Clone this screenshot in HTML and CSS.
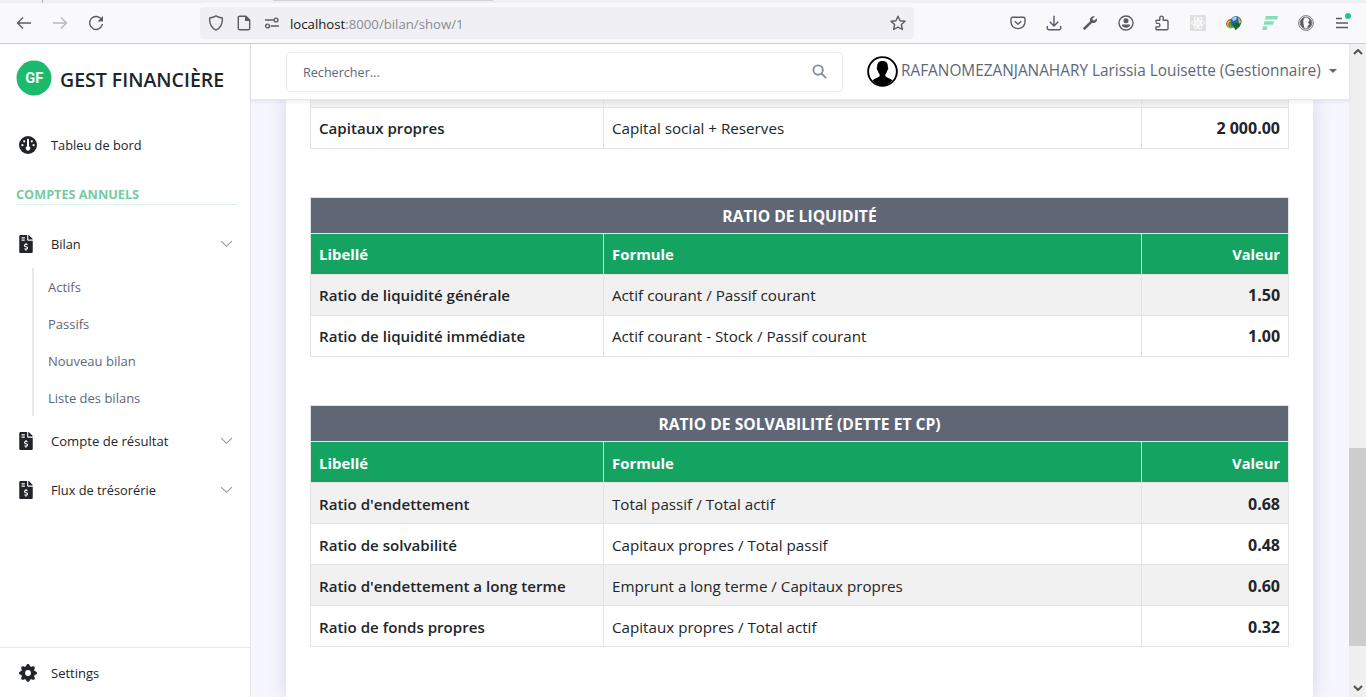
FILE: index.html
```html
<!DOCTYPE html>
<html lang="fr">
<head>
<meta charset="utf-8">
<title>Gest Financière</title>
<link rel="stylesheet" href="styles.css">
</head>
<body>
<svg class="sprite" aria-hidden="true">
  <symbol id="invoice" viewBox="0 0 384 512"><path d="M377 105L279.100 7c-4.500-4.500-10.600-7-17-7H256v128h128v-6.100c0-6.300-2.500-12.400-7-16.900zM224 136V0H44C15 0 0 15 0 44v424c0 29 15 44 44 44h296c29 0 44-15 44-44V160H248c-13.200 0-24-10.800-24-24zM64 72c0-4.400 3.600-8 8-8h80c4.400 0 8 3.600 8 8v16c0 4.400-3.600 8-8 8H72c-4.400 0-8-3.600-8-8V72zm0 80v-16c0-4.400 3.600-8 8-8h80c4.400 0 8 3.600 8 8v16c0 4.400-3.600 8-8 8H72c-4.400 0-8-3.600-8-8zm144 263.900V440c0 4.400-3.600 8-8 8h-16c-4.400 0-8-3.600-8-8v-24.300c-11.300-.6-22.300-4.500-31.400-11.300-3.900-2.900-4.100-8.800-.6-12.100l11.800-11.200c2.800-2.600 6.900-2.800 10.100-.7 3.900 2.400 8.300 3.700 12.800 3.700h28.100c6.500 0 11.800-5.900 11.800-13.200 0-6-3.600-11.200-8.800-12.700l-45-13.500c-18.600-5.600-31.600-23.400-31.600-43.400 0-24.500 19.100-44.400 42.700-45.100V232c0-4.400 3.600-8 8-8h16c4.400 0 8 3.600 8 8v24.300c11.300.6 22.300 4.500 31.400 11.300 3.900 2.900 4.100 8.800.6 12.100l-11.800 11.200c-2.800 2.600-6.900 2.800-10.100.7-3.900-2.400-8.300-3.700-12.800-3.700h-28.100c-6.500 0-11.800 5.900-11.800 13.200 0 6 3.600 11.200 8.800 12.700l45 13.500c18.600 5.600 31.600 23.400 31.600 43.400 0 24.500-19.100 44.400-42.700 45.200z"/></symbol>
  <symbol id="chevron" viewBox="0 0 14 8"><path d="M1.200 1 7 6.600 12.800 1"/></symbol>
</svg>

<div class="tabstrip"><i class="tab-mark"></i><i class="tab-edge"></i></div>
<div class="toolbar">
  <div class="nav-buttons">
    <svg class="tb" viewBox="0 0 16 16"><path d="M15 8H1.500M7 2.500 1.500 8 7 13.500"/></svg>
    <svg class="tb off" viewBox="0 0 16 16"><path d="M1 8h13.500M9 2.500 14.500 8 9 13.500"/></svg>
    <svg class="tb" viewBox="0 0 16 16"><path d="M13.600 4.500A6.500 6.500 0 1 0 14.500 9"/><path class="solid" d="M15 1v5.500H9.500z"/></svg>
  </div>
  <div class="urlbar">
    <svg class="tb" viewBox="0 0 16 16"><path d="M8 .9c2 1.300 4 1.900 6.400 2.100C14.700 9 12.500 13 8 15.200 3.500 13 1.300 9 1.600 3 4 2.800 6 2.200 8 .9z"/></svg>
    <svg class="tb" viewBox="0 0 16 16"><path d="M3.500 1.200h6.300L13.700 5v8.500a1.200 1.200 0 0 1-1.200 1.200h-9a1.200 1.200 0 0 1-1.200-1.200V2.400a1.200 1.200 0 0 1 1.200-1.200z"/><path class="solid" d="M9 1h1l4 4v1H9z"/></svg>
    <svg class="tb perms" viewBox="0 0 16 16"><path d="M1 5h8.500M6.500 11H15"/><circle cx="12" cy="5" r="1.900"/><circle cx="3.500" cy="11" r="1.900"/></svg>
    <span class="url"><b>localhost</b>:8000/bilan/show/1</span>
    <svg class="tb star" viewBox="0 0 16 16"><path d="M8 1.200l2.100 4.500 4.900.6-3.600 3.300 1 4.900L8 12.100l-4.400 2.400 1-4.900L1 6.300l4.900-.6z"/></svg>
  </div>
  <div class="extensions">
    <svg class="tb" viewBox="0 0 16 16"><path d="M2.500 2.300h11a1.500 1.500 0 0 1 1.500 1.500V7a7 6.600 0 0 1-14 0V3.800a1.500 1.500 0 0 1 1.500-1.500z"/><path d="M4.800 6.200 8 9.200l3.200-3"/></svg>
    <svg class="tb" viewBox="0 0 16 16"><path d="M8 .8v10M3.800 6.800 8 11l4.200-4.200M1.300 11v2.300a1.400 1.400 0 0 0 1.400 1.400h10.600a1.400 1.400 0 0 0 1.400-1.400V11"/></svg>
    <svg class="tb" viewBox="0 0 16 16"><path class="solid" d="M14.700 3.300 12 5.800l-1.800-1.700 2.600-2.700C10.500.5 7.600 2.300 8 5.300c0 .6.100 1-.3 1.500L1.500 12.600c-1.200 1.200.7 3 1.900 1.900l6-6.100c.5-.5 1-.4 1.600-.4 3 .4 4.700-2.300 3.700-4.700z"/></svg>
    <svg class="tb" viewBox="0 0 16 16"><circle cx="8" cy="8" r="7"/><circle class="solid" cx="8" cy="5.800" r="2.500"/><path class="solid" d="M3.800 9.500h8.400c0 1.800-1.800 3.300-4.200 3.300s-4.200-1.500-4.200-3.300z"/></svg>
    <svg class="tb" viewBox="0 0 16 16"><path d="M2 7.500V6.200a1 1 0 0 1 1-1h2.800V2.800a1.700 1.700 0 0 1 3.400 0v2.400H13a1 1 0 0 1 1 1v7.600a1 1 0 0 1-1 1H3a1 1 0 0 1-1-1v-1.900h2.200a1.700 1.700 0 0 0 0-3.500H2"/></svg>
    <svg class="react" viewBox="0 0 16 16"><rect width="16" height="16"/><ellipse cx="8" cy="8" rx="6.300" ry="2.400"/><ellipse cx="8" cy="8" rx="6.300" ry="2.400" transform="rotate(60 8 8)"/><ellipse cx="8" cy="8" rx="6.300" ry="2.400" transform="rotate(120 8 8)"/><circle cx="8" cy="8" r="1.200"/></svg>
    <svg class="idm" viewBox="0 0 16 16"><ellipse cx="5" cy="8.500" rx="5" ry="4.600" fill="#d84a2e" transform="rotate(-35 5 8.500)"/><ellipse cx="5.400" cy="9" rx="4.200" ry="3.800" fill="#f0c530"/><ellipse cx="6" cy="9.500" rx="3.800" ry="3.200" fill="#44a83c"/><circle cx="10" cy="6.600" r="5.600" fill="#2468b4"/><path d="M6 4c1-2 3-2.500 5-2l-1 3-3 1z" fill="#9fd2ef"/><path d="M12 2.500c2 1 3 3 3 5l-2 1z" fill="#e6bd2e"/><path d="M6.500 8h4V6.500l4 4.200-5 4.600-2-4z" fill="#17691f"/></svg>
    <svg class="fbars" viewBox="0 0 16 16"><path d="M4 1h12l-1 3.600H3zM2.500 6.300h9.500l-1 3.500H1.500zM1 11.500h4.500l-1 3.500H0z"/></svg>
    <svg class="tb duck" viewBox="0 0 16 16"><circle cx="8" cy="8" r="7.400"/><circle cx="8" cy="8" r="5.900"/><path class="solid" d="M6.600 13.400C3 12 2.200 9 2.600 6.500 3 4 5 2.600 7.200 2.500 5.600 3.800 5 5.500 5.400 8c.2 1.800.8 3.500 1.200 5.400zM8.500 2.600c3 .2 5 2.600 5 5.400 0 2.500-1.600 4.500-3.800 5.200-.3-1.200-.2-2 .2-2.700 1-.5 1.400-1 1.500-1.600-.9-.3-1.500-1-1.300-1.800.3-.8.900-.9 1.300-.8-.2-1.900-1.200-3.100-2.900-3.700z"/></svg>
    <span class="menu"><svg class="tb" viewBox="0 0 16 16"><path d="M2 3.500h6M2 8h12M2 12.500h12"/></svg><i class="dot"></i></span>
  </div>
</div>

<div class="page">
  <aside class="sidebar">
    <div class="brand">
      <svg class="logo" viewBox="0 0 36 36"><circle cx="18" cy="18" r="17.500"/><text x="18.200" y="23.200" text-anchor="middle" textLength="18" lengthAdjust="spacingAndGlyphs">GF</text></svg>
      <span>GEST FINANCIÈRE</span>
    </div>
    <a class="item first"><svg class="ico" viewBox="0 0 18 18"><circle cx="9" cy="9" r="9"/><g fill="#fff"><path d="M8 3.800a1 1 0 0 1 2 0v6.500a2.200 2.200 0 1 1-2 0z"/><circle cx="5.200" cy="5.300" r="1.100"/><circle cx="12.800" cy="5.300" r="1.100"/><circle cx="3.400" cy="9.200" r="1.100"/><circle cx="14.600" cy="9.200" r="1.100"/></g></svg><span>Tableu de bord</span></a>
    <h2 class="heading">COMPTES ANNUELS</h2>
    <a class="item"><svg class="ico doc"><use href="#invoice"/></svg><span>Bilan</span><svg class="chev"><use href="#chevron"/></svg></a>
    <nav class="sub"><a>Actifs</a><a>Passifs</a><a>Nouveau bilan</a><a>Liste des bilans</a></nav>
    <a class="item"><svg class="ico doc"><use href="#invoice"/></svg><span class="wide">Compte de résultat</span><svg class="chev"><use href="#chevron"/></svg></a>
    <a class="item"><svg class="ico doc"><use href="#invoice"/></svg><span>Flux de trésorérie</span><svg class="chev"><use href="#chevron"/></svg></a>
    <a class="item settings"><svg class="ico" viewBox="0 0 16 16"><path d="M9.405 1.050c-.413-1.400-2.397-1.400-2.810 0l-.1.340a1.464 1.464 0 0 1-2.105.872l-.310-.170c-1.283-.698-2.686.705-1.987 1.987l.169.311c.446.820.023 1.841-.872 2.105l-.340.100c-1.400.413-1.400 2.397 0 2.810l.340.100a1.464 1.464 0 0 1 .872 2.105l-.170.310c-.698 1.283.705 2.686 1.987 1.987l.311-.169a1.464 1.464 0 0 1 2.105.872l.100.340c.413 1.400 2.397 1.400 2.810 0l.100-.340a1.464 1.464 0 0 1 2.105-.872l.310.170c1.283.698 2.686-.705 1.987-1.987l-.169-.311a1.464 1.464 0 0 1 .872-2.105l.340-.100c1.400-.413 1.400-2.397 0-2.810l-.340-.100a1.464 1.464 0 0 1-.872-2.105l.170-.310c.698-1.283-.705-2.686-1.987-1.987l-.311.169a1.464 1.464 0 0 1-2.105-.872zM8 10.600a2.600 2.600 0 1 1 0-5.200 2.600 2.600 0 0 1 0 5.200z"/></svg><span>Settings</span></a>
  </aside>

  <div class="main">
    <header class="topbar">
      <div class="search"><span>Rechercher...</span><svg viewBox="0 0 16 16"><circle cx="6.500" cy="6.500" r="5"/><path d="M10.300 10.300 15 15"/></svg></div>
      <svg class="avatar" viewBox="0 0 30 30"><circle cx="15" cy="15" r="13.900"/><path d="M15 4.800c4 0 5.400 2.600 5.200 6 .7.200.4 2.400-.5 3-.4 2-1.200 3-1.900 3.900v2c1.500 1.700 5 1.900 6.700 3.800C22 27 18.500 28.700 15 28.700S8 27 5.500 23.500c1.700-1.900 5.200-2.100 6.700-3.800v-2c-.7-.9-1.500-1.900-1.900-3.900-.9-.6-1.200-2.800-.5-3-.2-3.400 1.200-6 5.200-6z"/></svg>
      <div class="account"><span class="user">RAFANOMEZANJANAHARY Larissia Louisette (Gestionnaire)</span><i class="caret"></i></div>
    </header>
    <div class="content">
      <div class="card">
        <table class="raised">
          <colgroup><col class="c1"><col class="c2"><col class="c3"></colgroup>
          <tr class="cut odd"><td></td><td></td><td></td></tr>
          <tr><th>Capitaux propres</th><td>Capital social + Reserves</td><td class="val">2 000.00</td></tr>
        </table>
        <table class="raised">
          <colgroup><col class="c1"><col class="c2"><col class="c3"></colgroup>
          <tr class="title"><th colspan="3">RATIO DE LIQUIDITÉ</th></tr>
          <tr class="head"><th>Libellé</th><th>Formule</th><th class="val">Valeur</th></tr>
          <tr class="odd"><th>Ratio de liquidité générale</th><td>Actif courant / Passif courant</td><td class="val">1.50</td></tr>
          <tr><th>Ratio de liquidité immédiate</th><td>Actif courant - Stock / Passif courant</td><td class="val">1.00</td></tr>
        </table>
        <table>
          <colgroup><col class="c1"><col class="c2"><col class="c3"></colgroup>
          <tr class="title"><th colspan="3">RATIO DE SOLVABILITÉ (DETTE ET CP)</th></tr>
          <tr class="head"><th>Libellé</th><th>Formule</th><th class="val">Valeur</th></tr>
          <tr class="odd"><th>Ratio d'endettement</th><td>Total passif / Total actif</td><td class="val">0.68</td></tr>
          <tr><th>Ratio de solvabilité</th><td>Capitaux propres / Total passif</td><td class="val">0.48</td></tr>
          <tr class="odd"><th>Ratio d'endettement a long terme</th><td>Emprunt a long terme / Capitaux propres</td><td class="val">0.60</td></tr>
          <tr><th>Ratio de fonds propres</th><td>Capitaux propres / Total actif</td><td class="val">0.32</td></tr>
        </table>
      </div>
    </div>
  </div>

  <div class="scrollbar">
    <svg viewBox="0 0 10 6"><path d="M1 5l4-4 4 4"/></svg>
    <i class="thumb"></i>
    <svg viewBox="0 0 10 6"><path d="M1 1l4 4 4-4"/></svg>
  </div>
</div>
</body>
</html>
```
FILE: styles.css
```css
* { box-sizing: border-box; }
body {
  margin: 0;
  width: 1366px;
  height: 697px;
  overflow: hidden;
  display: flex;
  flex-direction: column;
  font-family: "Open Sans", "Noto Sans", sans-serif;
  color: #212529;
  background: #fff;
}
svg { display: block; flex: none; }
.sprite { position: absolute; width: 0; height: 0; }

/* Browser chrome */
.tabstrip { height: 3px; flex: none; background: #f0f0f4; display: flex; }
.tab-mark { width: 1px; margin-left: 42px; background: #aeaeb4; }
.tab-edge { width: 220px; height: 1px; margin-left: 230px; background: #d2d2d6; }
.toolbar {
  height: 41px;
  flex: none;
  display: flex;
  align-items: center;
  background: #f9f9fb;
  border-bottom: 1px solid #ccc;
}
.tb { width: 16px; height: 16px; fill: none; stroke: #5b5b66; stroke-width: 1.4; stroke-linejoin: round; }
.tb .solid { fill: #5b5b66; stroke: none; }
.off { opacity: .4; }
.nav-buttons { display: flex; gap: 20px; padding-left: 16px; width: 200px; }
.urlbar {
  display: flex;
  align-items: center;
  width: 714px;
  height: 32px;
  padding: 0 8px;
  border-radius: 4px;
  background: #f0f0f4;
}
.urlbar .tb { margin-right: 12px; }
.urlbar .perms { margin-right: 10px; }
.urlbar .star { margin: 0 0 0 auto; }
.url { font-size: 13.2px; color: #8a8a92; padding-top: 1px; }
.url b { font-weight: 400; color: #15141a; }
.extensions { display: flex; align-items: center; gap: 20px; margin-left: 96px; }
.react { width: 16px; height: 16px; fill: none; stroke: #fff; stroke-width: .9; }
.react rect { fill: #e0e0e0; stroke: none; }
.idm, .fbars { width: 16px; height: 16px; }
.fbars { fill: #83dfb9; }
.duck { stroke-width: .8; }
.menu { position: relative; }
.dot { position: absolute; right: -1px; top: -2px; width: 6px; height: 6px; border-radius: 50%; background: #21c299; }

.page { flex: 1; display: flex; min-height: 0; }

/* Sidebar */
.sidebar { width: 251px; display: flex; flex-direction: column; border-right: 1px solid #e4e5ea; }
.brand {
  display: flex;
  align-items: center;
  gap: 8px;
  height: 70px;
  padding: 0 0 2px 16px;
  font-size: 19.5px;
  font-weight: 600;
}
.brand span { padding-top: 2px; white-space: nowrap; }
.logo { width: 36px; height: 36px; fill: #1bba6f; }
.logo text { fill: #fff; font: 700 15px Roboto, sans-serif; }
.item {
  display: flex;
  align-items: center;
  height: 49px;
  padding: 0 17px 0 19px;
  font-size: 12.8px;
}
.wide { font-size: 13.1px; }
.first { height: 62px; }
.ico { width: 18px; height: 18px; margin-right: 14px; fill: #212529; }
.doc { width: 14px; margin-right: 18px; }
.chev { width: 13px; height: 8px; margin-left: auto; fill: none; stroke: #8b93a3; stroke-width: 1.1; }
.heading {
  margin: 9px 13px 14px 16px;
  padding-bottom: 1px;
  border-bottom: 1px solid #d9f1e7;
  font-size: 12.7px;
  line-height: 18px;
  font-weight: 700;
  color: #75cba3;
}
.sub { margin-left: 32px; border-left: 2px solid #e7e9ed; }
.sub a { display: block; height: 37px; line-height: 38px; padding-left: 14px; font-size: 13px; color: #5d6778; }
.settings { margin-top: auto; height: 50px; border-top: 1px solid #e7e9ed; font-size: 13px; }

/* Main column */
.main { flex: 1; min-width: 0; display: flex; flex-direction: column; }
.topbar {
  position: relative;
  height: 56px;
  display: flex;
  align-items: center;
  padding-left: 35px;
  background: #fff;
  border-bottom: 1px solid #e7e7ec;
  box-shadow: 0 2px 4px rgba(0, 0, 0, .07);
}
.search {
  display: flex;
  align-items: center;
  justify-content: space-between;
  width: 557px;
  height: 40px;
  padding: 0 15px 0 16px;
  border: 1px solid #e7e9ed;
  border-radius: 4px;
  font-size: 12.6px;
  color: #5d6778;
}
.search span { padding-top: 2px; }
.search svg { width: 15px; height: 15px; fill: none; stroke: #828d9f; stroke-width: 2; }
.avatar { width: 31px; height: 31px; margin: 0 3px 0 24px; }
.avatar circle { fill: #fff; stroke: #000; stroke-width: 1.8; }
.account { display: flex; align-items: center; padding-bottom: 2px; }
.user { font-size: 15.37px; color: #5d6778; white-space: nowrap; }
.caret { margin-left: 8px; border: 4px solid transparent; border-top-color: #5d6778; border-bottom: 0; }
.content { flex: 1; min-height: 0; display: flex; overflow: hidden; padding: 0 36px 0 35px; background: #f5f6fe; }
.card { flex: 1; padding: 0 24px; background: #fff; box-shadow: 0 0 18px rgba(33, 37, 80, .16); }

table { width: 978px; margin-bottom: 48px; table-layout: fixed; border-collapse: collapse; font-size: 15.18px; }
.c1 { width: 293px; }
.c2 { width: 538px; }
.c3 { width: 147px; }
tr { height: 41px; }
th, td { padding: 2px 8px 0; border: 1px solid #e1e3e8; line-height: 24px; text-align: left; white-space: nowrap; }
.raised th, .raised td { padding-top: 0; }
th { font-weight: 600; font-size: 15.1px; }
.val { text-align: right; font-weight: 700; font-size: 16px; }
.odd { background: #f1f1f1; }
.cut { height: 7px; }
.raised .cut td { padding: 0; border-top: 0; line-height: 0; }
.title { height: 36px; background: #5f6777; color: #fff; }
table .title th { padding-top: 1px; text-align: center; font-weight: 700; font-size: 15.65px; }
.head { background: #15a362; color: #fff; }
.head th { font-weight: 700; font-size: 14.9px; }
.head .val { font-size: 14.7px; }

.scrollbar {
  width: 17px;
  display: flex;
  flex-direction: column;
  align-items: center;
  padding: 5px 0 6px;
  background: #f0f0f0;
}
.scrollbar svg { width: 10px; height: 6px; fill: none; stroke: #505050; stroke-width: 2; }
.thumb { width: 17px; height: 198px; margin: 393px 0 auto; background: #cdcdcd; }
```
